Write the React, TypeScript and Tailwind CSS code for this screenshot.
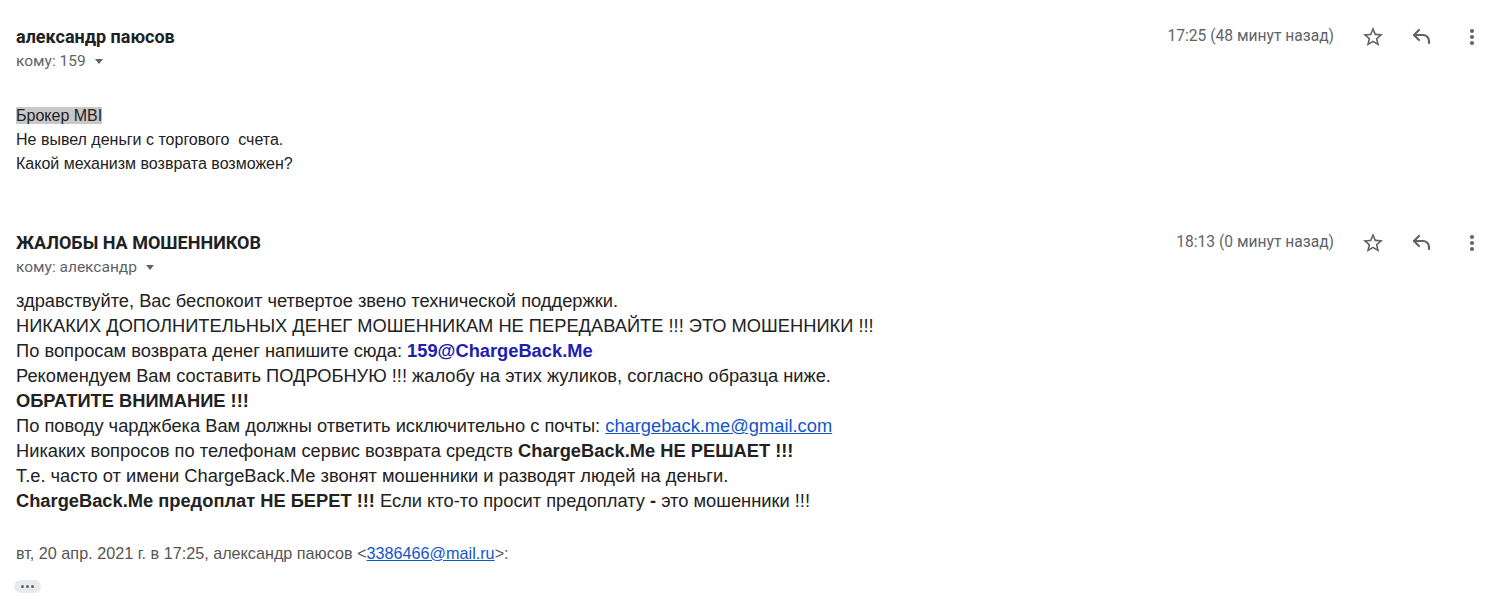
function StarIcon() {
  return (
    <svg width="24" height="24" viewBox="0 0 24 24" fill="#5f6368" className="mr-[25px]">
      <path d="M22 9.24l-7.19-.62L12 2 9.19 8.63 2 9.24l5.46 4.73L5.82 21 12 17.27 18.18 21l-1.63-7.03L22 9.24zM12 15.4l-3.76 2.27 1-4.28-3.32-2.88 4.38-.38L12 6.1l1.71 4.04 4.38.38-3.32 2.88 1 4.28L12 15.4z" />
    </svg>
  );
}

function ReplyIcon() {
  return (
    <svg width="24" height="24" viewBox="0 0 24 24" fill="none" stroke="#5f6368" strokeWidth="2.2" strokeLinecap="round" strokeLinejoin="round" className="mr-[26px]">
      <path d="M9 15 4 10l5-5" />
      <path d="M4 10h9a6 6 0 0 1 6 6v2" />
    </svg>
  );
}

function MoreIcon() {
  return (
    <svg width="24" height="24" viewBox="0 0 24 24" fill="#5f6368" className="mr-[3px]">
      <path d="M12 8c1.1 0 2-.9 2-2s-.9-2-2-2-2 .9-2 2 .9 2 2 2zm0 2c-1.1 0-2 .9-2 2s.9 2 2 2 2-.9 2-2-.9-2-2-2zm0 6c-1.1 0-2 .9-2 2s.9 2 2 2 2-.9 2-2-.9-2-2-2z" />
    </svg>
  );
}

function Header({ name, to, time }: { name: string; to: string; time: string }) {
  return (
    <div className="flex items-start justify-between">
      <div>
        <div className="text-[18px] font-bold text-[#202124] leading-[22px]">{name}</div>
        <div className="flex items-center text-[15.5px] text-[#5f6368] leading-[20px] mt-[3px]">
          кому: {to}
          <span className="ml-[9px] inline-block w-0 h-0 border-l-[4.5px] border-r-[4.5px] border-t-[5px] border-l-transparent border-r-transparent border-t-[#5f6368]" />
        </div>
      </div>
      <div className="flex items-center text-[#5f6368] h-[22px]">
        <span className="text-[15.6px] mr-[27px]">{time}</span>
        <StarIcon />
        <ReplyIcon />
        <MoreIcon />
      </div>
    </div>
  );
}

export default function App() {
  return (
    <div className="w-[1503px] h-[606px] bg-white overflow-hidden px-[16px] pt-[26px]" style={{ fontFamily: 'Roboto, Arial, sans-serif' }}>
      <Header name="александр паюсов" to="159" time="17:25 (48 минут назад)" />

      {/* first message */}
      <div className="mt-[33px] text-[16px] leading-[24px] text-[#222]" style={{ fontFamily: '"Liberation Sans", Arial, sans-serif' }}>
        <div><span className="bg-[#c8c8c8]">Брокер MBI</span></div>
        <div>Не вывел деньги с торгового&nbsp; счета.</div>
        <div>Какой механизм возврата возможен?</div>
      </div>

      <div className="mt-[56px]">
        <Header name="ЖАЛОБЫ НА МОШЕННИКОВ" to="александр" time="18:13 (0 минут назад)" />
      </div>

      {/* reply */}
      <div className="mt-[11px] text-[18.3px] leading-[25px] text-[#222]" style={{ fontFamily: '"Liberation Sans", Arial, sans-serif' }}>
        <div>здравствуйте, Вас беспокоит четвертое звено технической поддержки.</div>
        <div>НИКАКИХ ДОПОЛНИТЕЛЬНЫХ ДЕНЕГ МОШЕННИКАМ НЕ ПЕРЕДАВАЙТЕ !!! ЭТО МОШЕННИКИ !!!</div>
        <div>
          По вопросам возврата денег напишите сюда: <b className="text-[#2020b0]">159@ChargeBack.Me</b>
        </div>
        <div>Рекомендуем Вам составить ПОДРОБНУЮ !!! жалобу на этих жуликов, согласно образца ниже.</div>
        <div><b>ОБРАТИТЕ ВНИМАНИЕ !!!</b></div>
        <div>
          По поводу чарджбека Вам должны ответить исключительно с почты:{' '}
          <a className="text-[#1155cc] underline">chargeback.me@gmail.com</a>
        </div>
        <div>
          Никаких вопросов по телефонам сервис возврата средств <b>ChargeBack.Me НЕ РЕШАЕТ !!!</b>
        </div>
        <div>Т.е. часто от имени ChargeBack.Me звонят мошенники и разводят людей на деньги.</div>
        <div>
          <b>ChargeBack.Me предоплат НЕ БЕРЕТ !!!</b> Если кто-то просит предоплату <b>-</b> это мошенники !!!
        </div>
      </div>

      <div className="mt-[30px] text-[16.2px] leading-[20px] text-[#555]" style={{ fontFamily: '"Liberation Sans", Arial, sans-serif' }}>
        вт, 20 апр. 2021 г. в 17:25, александр паюсов &lt;<a className="text-[#1155cc] underline">3386466@mail.ru</a>&gt;:
      </div>
      <div className="mt-[17px] ml-[-2px] w-[27px] h-[13px] rounded-full bg-[#e8eaed] flex items-center justify-center gap-[2px]">
        <span className="w-[3px] h-[3px] rounded-full bg-[#5f6368]" />
        <span className="w-[3px] h-[3px] rounded-full bg-[#5f6368]" />
        <span className="w-[3px] h-[3px] rounded-full bg-[#5f6368]" />
      </div>
    </div>
  );
}
